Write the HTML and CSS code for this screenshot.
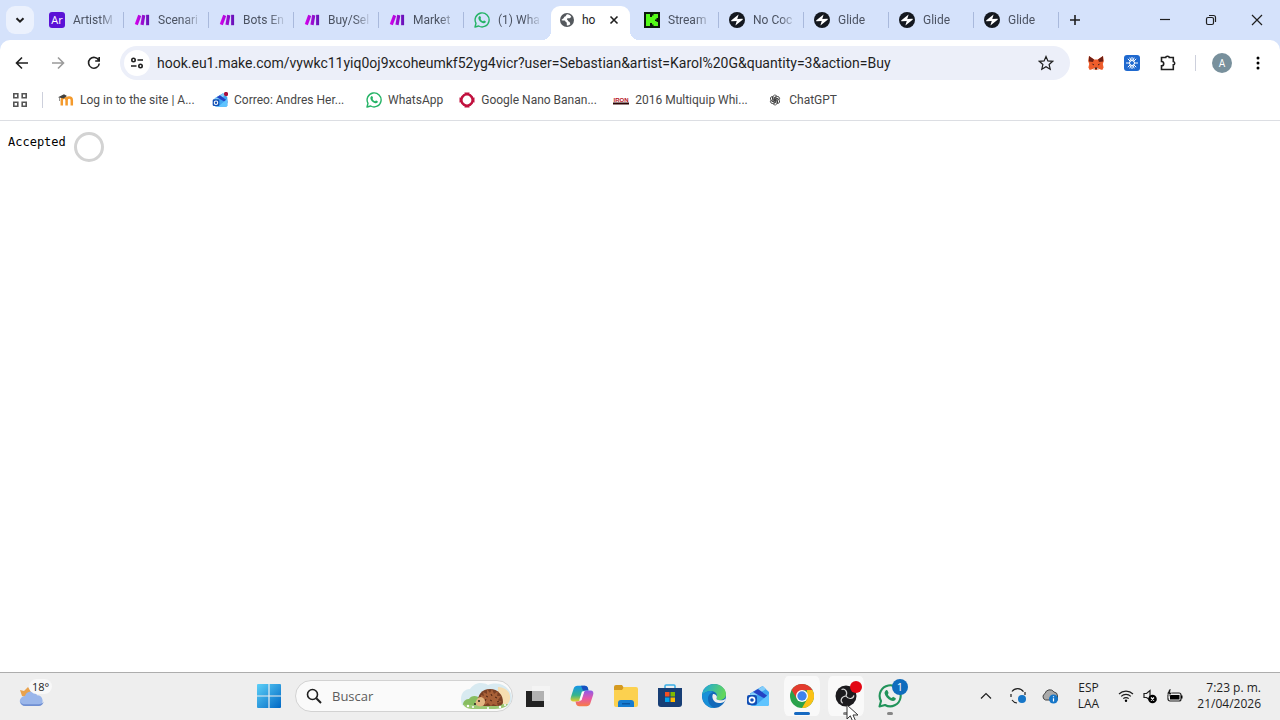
FILE: index.html
```
<!DOCTYPE html>
<html lang="es">
<head>
  <meta charset="UTF-8">
  <title>hook.eu1.make.com</title>
  <link rel="stylesheet" href="styles.css">
</head>
<body>

<!-- shared icons -->
<svg class="sprite" aria-hidden="true">
  <defs>
    <linearGradient id="makeGrad" gradientUnits="userSpaceOnUse" x1="1" x2="15"><stop offset="0" stop-color="#d800ee"/><stop offset="1" stop-color="#6414b8"/></linearGradient>
    <linearGradient id="winGrad" x1="0" y1="0" x2="1" y2="1"><stop offset="0" stop-color="#5cd0f8"/><stop offset="1" stop-color="#0067c4"/></linearGradient>
  </defs>
  <symbol id="make" viewBox="0 0 16 16">
    <g fill="url(#makeGrad)"><path d="M4.200 2.800 7.200 4.100 3.800 13.200 .8 11.900z"/><path d="M8.200 2.800l3.100.6L9.600 13.200l-3.200-.6z"/><path d="M12.100 2.800h3v10.400h-3z"/></g>
  </symbol>
  <symbol id="whatsapp" viewBox="0 0 16 16">
    <path d="M1 15l1-3.700A7 7 0 1 1 4.700 14z" fill="none" stroke="currentColor" stroke-width="1.400" stroke-linejoin="round"/>
    <path d="M5.300 4.200c.5-.4 1 0 1.200.4l.5 1.200c.1.400-.5.900-.4 1.200.5 1.100 1.400 1.900 2.500 2.300.4.100.8-.9 1.200-.7l1.300.7c.4.200.3.900-.1 1.300-.7.800-1.800.8-2.900.4C6.500 10.200 4.800 8.300 4.400 6.400c-.1-.9.300-1.700.9-2.200z" fill="currentColor"/>
  </symbol>
  <symbol id="glide" viewBox="0 0 16 16">
    <circle cx="8" cy="8" r="8" fill="#14181f"/>
    <path d="M9.600 2.600 2.400 8.200c-.4.400-.2 1.100.4 1.100l4.900-.4zM6.400 13.400l7.200-5.600c.4-.4.200-1.100-.4-1.100l-4.900.4z" fill="#fff"/>
  </symbol>
  <symbol id="outlook" viewBox="0 0 24 24">
    <path d="M4 9.500 16.500 2 23 8v12a2 2 0 0 1-2 2H6a2 2 0 0 1-2-2z" fill="#3fa4f0"/>
    <path d="M4 10 17 2l3 3L5 15z" fill="#83cdfa"/>
    <path d="M7 8l5-3 11 8v4z" fill="#2543c4"/>
    <path d="M9 22 23 10v10a2 2 0 0 1-2 2z" fill="#5fc4ff"/>
    <rect x="1" y="11" width="10" height="10" rx="2" fill="#124fb4"/>
    <circle cx="6" cy="16" r="2.600" fill="none" stroke="#fff" stroke-width="1.600"/>
  </symbol>
</svg>

<header class="browser">
  <nav class="tab-strip">
    <button class="tab-search" aria-label="Buscar pestañas"><svg width="10" height="10" viewBox="0 0 10 10"><path d="M1.500 3.200 5 6.700l3.500-3.500" class="line bold"/></svg></button>
    <div class="tabs">
      <div class="tab">
        <svg width="16" height="16" viewBox="0 0 16 16"><rect width="16" height="16" rx="3" fill="#5b12d6"/><text x="8" y="12" class="ar-logo">Ar</text></svg>
        <span class="tab-title">ArtistM</span>
      </div>
      <div class="tab"><svg width="16" height="16"><use href="#make"/></svg><span class="tab-title">Scenari</span></div>
      <div class="tab"><svg width="16" height="16"><use href="#make"/></svg><span class="tab-title">Bots En</span></div>
      <div class="tab"><svg width="16" height="16"><use href="#make"/></svg><span class="tab-title">Buy/Sel</span></div>
      <div class="tab"><svg width="16" height="16"><use href="#make"/></svg><span class="tab-title">Market</span></div>
      <div class="tab last-before"><svg class="wa" width="16" height="16"><use href="#whatsapp"/></svg><span class="tab-title">(1) Wha</span></div>
      <div class="tab active">
        <svg width="14" height="14" viewBox="0 0 14 14"><circle cx="7" cy="7" r="7" fill="#54585d"/><path d="M7 1.300c-1.200.8-.7 2-2 2.300-1 .3-.8 1.400-1.500 1.600L1.300 7c.5.500 2.300.4 3.200.5 1 .2.800 1.500 1.800 1.700.8.200.3 1.500.6 3.400 1.200 0 2.500-.5 3.500-1.400-.6-1.200-.3-2.200-1.600-2.700-1-.4-.8-1.500-1.700-1.800-.5-1.200.8-1.600 1.800-1.400.9.200 1.200-.8 2.400-1.400C10.500 2.500 9 1.400 7 1.300z" fill="#fff"/></svg>
        <span class="tab-title">ho</span>
        <button class="tab-close" aria-label="Cerrar"><svg width="10" height="10" viewBox="0 0 10 10"><path d="M1.500 1.500l7 7M8.500 1.500l-7 7" class="line"/></svg></button>
      </div>
      <div class="tab">
        <svg width="16" height="16" viewBox="0 0 16 16"><path d="M0 0h16v16H0z" fill="#0b1a0b"/><path d="M2 2h4v3h2V3.500h1.500V2H14v4h-1.500v1.500H11v1.500h1.500v1H14v4H9.500v-1.500H8V11H6v3H2z" fill="#53fc18"/></svg>
        <span class="tab-title">Stream</span>
      </div>
      <div class="tab"><svg width="16" height="16"><use href="#glide"/></svg><span class="tab-title">No Coc</span></div>
      <div class="tab"><svg width="16" height="16"><use href="#glide"/></svg><span class="tab-title">Glide</span></div>
      <div class="tab"><svg width="16" height="16"><use href="#glide"/></svg><span class="tab-title">Glide</span></div>
      <div class="tab"><svg width="16" height="16"><use href="#glide"/></svg><span class="tab-title">Glide</span></div>
    </div>
    <button class="new-tab" aria-label="Nueva pestaña"><svg width="12" height="12" viewBox="0 0 12 12"><path d="M6 1v10M1 6h10" class="line"/></svg></button>
    <div class="window-buttons">
      <button aria-label="Minimizar"><svg width="12" height="12" viewBox="0 0 12 12"><path d="M1 5.500h10" class="line thin"/></svg></button>
      <button aria-label="Restaurar"><svg width="12" height="12" viewBox="0 0 12 12"><rect x="1.500" y="3.500" width="7" height="7" rx="1.500" class="line thin"/><path d="M4 1.500h4.500a2 2 0 0 1 2 2V8" class="line thin"/></svg></button>
      <button aria-label="Cerrar ventana"><svg width="12" height="12" viewBox="0 0 12 12"><path d="M1 1l10 10M11 1L1 11" class="line thin"/></svg></button>
    </div>
  </nav>

  <div class="toolbar">
    <button class="tool" aria-label="Atrás"><svg width="16" height="16" viewBox="0 0 16 16"><path d="M14 8H2.500M8 2.500 2.500 8 8 13.500" class="line"/></svg></button>
    <button class="tool" aria-label="Adelante" disabled><svg width="16" height="16" viewBox="0 0 16 16"><path d="M2 8h11.500M8 2.500 13.500 8 8 13.500" class="line"/></svg></button>
    <button class="tool" aria-label="Recargar"><svg width="16" height="16" viewBox="0 0 16 16"><path d="M12.800 5.400A5.400 5.400 0 1 0 13.300 8.500M13.200 2v4H9.200" class="line"/></svg></button>
    <div class="omnibox">
      <button class="site-info" aria-label="Información del sitio"><svg width="14" height="14" viewBox="0 0 14 14"><circle cx="3.500" cy="4" r="1.700" class="line"/><path d="M7.500 4H13M1 10h5.500" class="line"/><circle cx="10.500" cy="10" r="1.700" class="line"/></svg></button>
      <input type="text" class="url" aria-label="Dirección" value="hook.eu1.make.com/vywkc11yiq0oj9xcoheumkf52yg4vicr?user=Sebastian&amp;artist=Karol%20G&amp;quantity=3&amp;action=Buy">
      <button class="star" aria-label="Añadir a marcadores"><svg width="16" height="16" viewBox="0 0 16 16"><path d="M8 1.500l1.900 4.400 4.800.4-3.600 3.200 1.100 4.700L8 11.700l-4.200 2.500 1.100-4.700L1.300 6.300l4.800-.4z" class="line thin"/></svg></button>
    </div>
    <div class="extensions">
      <button class="tool" aria-label="MetaMask"><svg width="16" height="16" viewBox="0 0 16 16"><path d="M1 1l5.200 3.600h3.600L15 1l.8 5-1 3 .8 3.500-1.300 2.500-3.300-1-1.500 1H6.500L5 14l-3.300 1L.4 12.500 1.200 9l-1-3z" fill="#ef5d2b"/><path d="M1 1l5 3.600L5 7 .8 6.500zM15 1l-5 3.600L11 7l4.200-.5z" fill="#6d2015"/><path d="M3.500 8.500l2.500.7-.2 1.300zM12.500 8.500l-2.500.7.2 1.300zM6.500 12.500h3l-.5 1.700H7z" fill="#42201e"/><path d="M5 14l1.500-1.500.5 2.500h-.5zM11 14l-1.500-1.500L9 15h.5z" fill="#e2cdc0"/></svg></button>
      <button class="tool" aria-label="Extensión"><svg width="16" height="16" viewBox="0 0 16 16"><rect width="16" height="16" rx="3" fill="#1f69cf"/><path d="M8 2v4M8 10v4M2 8h4M10 8h4M3.800 3.800l2.800 2.800M9.400 9.400l2.800 2.800M12.200 3.800 9.400 6.600M6.600 9.400l-2.800 2.800M5.800 2.600l1.300 3.200M10.200 2.600 8.900 5.800M5.800 13.400l1.300-3.200M10.200 13.400l-1.300-3.200" stroke="#fff"/><circle cx="8" cy="8" r="2.500" fill="none" stroke="#fff"/></svg></button>
      <button class="tool" aria-label="Extensiones"><svg width="18" height="18" viewBox="0 0 18 18"><path d="M2.500 3.500h4.200a1.800 1.300 0 0 1 3.600 0h4V7.500a1.400 1.700 0 0 1 0 3.400v4.600h-11.800v-3.600a2 2 0 0 0 0-4.400z" class="line"/></svg></button>
      <span class="divider"></span>
      <button class="avatar" aria-label="Perfil">A</button>
      <button class="tool menu" aria-label="Menú"><svg width="4" height="16" viewBox="0 0 4 16"><circle cx="2" cy="3" r="1.500"/><circle cx="2" cy="8" r="1.500"/><circle cx="2" cy="13" r="1.500"/></svg></button>
    </div>
  </div>

  <nav class="bookmarks">
    <button class="apps" aria-label="Aplicaciones"><svg width="16" height="16" viewBox="0 0 16 16" fill="none" stroke="#555" stroke-width="1.600"><path d="M1.800 1.800h4v4h-4zM10.200 1.800h4v4h-4zM1.800 10.200h4v4h-4zM10.200 10.200h4v4h-4z"/></svg></button>
    <span class="divider"></span>
    <a href="#" class="wide"><svg width="16" height="16" viewBox="0 0 16 16"><path d="M3.800 13.500V8.200a2.400 2.400 0 0 1 4.800 0v5.300M8.600 8.200a2.600 2.600 0 0 1 5.200 0v5.300" fill="none" stroke="#f49a2c" stroke-width="2.500"/><path d="M0 5.200 6 2.300 9 4 5.500 6.500z" fill="#40403e"/><path d="M1.500 5v4" stroke="#666" stroke-width=".7"/></svg><span>Log in to the site | A...</span></a>
    <a href="#" class="wide"><svg width="16" height="16" viewBox="0 0 24 24"><use href="#outlook"/><circle cx="21" cy="3" r="3.200" fill="#a90f3c"/></svg><span>Correo: Andres Her...</span></a>
    <a href="#"><svg class="wa" width="16" height="16"><use href="#whatsapp"/></svg><span>WhatsApp</span></a>
    <a href="#" class="wide"><svg width="16" height="16" viewBox="0 0 16 16"><path d="M4.500 2h1V.5h5V2h1L14 4.500v1h1.500v5H14v1L11.500 14h-1v1.500h-5V14h-1L2 11.500v-1H.5v-5H2v-1z" fill="#c1113e"/><circle cx="8" cy="8" r="4.400" fill="#fff"/></svg><span>Google Nano Banan...</span></a>
    <a href="#" class="wide"><svg width="16" height="16" viewBox="0 0 16 16"><text x="8" y="9.500" class="iron-logo">IRON</text><path d="M0 10.500h16v2H0z" fill="#2b0505"/></svg><span>2016 Multiquip Whi...</span></a>
    <a href="#"><svg width="16" height="16" viewBox="-2 -2 20 20"><g fill="none" stroke="#333" stroke-width="1"><path id="petal" d="M5.500 7.800V4.300a2.500 2.500 0 0 1 4.700-1.200L7 5v4.500"/><use href="#petal" transform="rotate(60 8 8)"/><use href="#petal" transform="rotate(120 8 8)"/><use href="#petal" transform="rotate(180 8 8)"/><use href="#petal" transform="rotate(240 8 8)"/><use href="#petal" transform="rotate(300 8 8)"/></g></svg><span>ChatGPT</span></a>
  </nav>
</header>

<main class="page">
  <pre>Accepted</pre>
  <span class="busy-ring"></span>
</main>

<footer class="taskbar">
  <div class="weather">
    <svg width="26" height="20" viewBox="0 0 26 20"><path d="M1 3l4 1 4-4 3 5-5 5-4-1z" fill="#e9a24c"/><path d="M6.500 19a5.500 5 0 0 1-.5-10 6.500 6.500 0 0 1 12-.8A5.600 5.500 0 0 1 19.500 19z" fill="#9ab6ea"/><path d="M1.200 14.500c1 2 2.800 2.800 5.300 2.800h13c2.500 0 4.200-1 5.200-2.800-.4 2.700-2.300 4.500-5.200 4.500h-13c-2.900 0-4.800-1.800-5.300-4.500z" fill="#6f8fd2"/></svg>
    <span class="temp">18°</span>
  </div>

  <div class="apps-row">
    <button class="app" aria-label="Inicio"><svg width="24" height="24" viewBox="0 0 24 24" fill="url(#winGrad)"><path d="M0 1a1 1 0 0 1 1-1h22a1 1 0 0 1 1 1v22a1 1 0 0 1-1 1H1a1 1 0 0 1-1-1z"/><path d="M11.400 0h1.200v24h-1.200zM0 11.400h24v1.200H0z" fill="#eee"/></svg></button>
    <label class="search">
      <svg width="16" height="16" viewBox="0 0 16 16"><circle cx="6.500" cy="6.500" r="5" class="line"/><path d="M10.300 10.300 15 15" class="line bold"/></svg>
      <input type="text" placeholder="Buscar" aria-label="Buscar">
      <svg width="52" height="28" viewBox="0 0 52 28">
        <path d="M2 23C-1 14 3 7 10 7c5-7 13-7 18-4 8-3 16-1 20 4 5 5 5 12 0 17-8 4-36 4-46-1z" fill="#d8eaf1"/>
        <path d="M38 5c7 0 13 5 12 12-1 6-6 8-13 8z" fill="#f6ddb0"/>
        <path d="M3 23c0-5 4-6 6-6 2-4 9-4 11 0l1 7z" fill="#87bd60"/>
        <path d="M3 22c10 3 30 0 45 0-2 4-8 5-16 5H14c-6 0-9-1-11-5z" fill="#9cc873"/>
        <path d="M18 21c-1-8 4-14 12-14s13 6 13 13c0 3-3 4-6 4H24c-3 0-5-1-6-3z" fill="#7b4024"/>
        <path d="M21 13l3 1-1-4 4 2 0-5 3 4 2-4 2 5 4-3-1 5 4 0-3 4 4 2-5 1 1 3-5-2-2 2-3-3-3 2-1-4-3 1z" fill="#a86037"/>
        <path d="M26 14l2 1M31 12l1 2M35 15l2 1M30 18l2 1M37 20l2-1M25 19l1-2" stroke="#4c2414"/>
        <path d="M15 22c1-3 2-7 6-7 4 1 5 5 3 8-2 2-6 2-9-1z" fill="#e3b681"/><circle cx="19" cy="19" r="1" fill="#222"/><circle cx="15" cy="22" r="1" fill="#222"/>
        <g fill="#fff"><circle cx="8" cy="24" r="1.200"/><circle cx="13" cy="25" r="1"/><circle cx="40" cy="25" r="1.200"/><circle cx="45" cy="23" r="1"/><circle cx="28" cy="26" r="1"/></g>
      </svg>
    </label>
    <button class="app" aria-label="Vista de tareas"><svg width="24" height="24" viewBox="0 0 24 24"><path d="M0 7h18v16H0z" fill="#222"/><path d="M6 2h18v15H6z" fill="#f4f4f4"/><path d="M6 7h12v10H6z" fill="#b2b2b2"/></svg></button>
    <button class="app" aria-label="Copilot"><svg width="24" height="24" viewBox="0 0 26 24">
      <linearGradient id="cpA" x2="0" y2="1"><stop offset="0" stop-color="#1595e8"/><stop offset=".6" stop-color="#36b58c"/><stop offset="1" stop-color="#e8cf25"/></linearGradient>
      <linearGradient id="cpB" x2="0" y2="1"><stop offset="0" stop-color="#8b5bea"/><stop offset=".5" stop-color="#e557a7"/><stop offset="1" stop-color="#f77b45"/></linearGradient>
      <path d="M8 1h8c2 0 3 1 3.500 3l.5 2h-3c-2 0-3 1-3.500 3l-2 6c-.5 2-2 3-4 3H4c-3 0-4-2-3-5l3-9c.7-2 2-3 4-3z" fill="url(#cpA)"/>
      <path d="M12 1h4c2 0 3 1 3.500 3l.5 2h-6z" fill="#1751c0"/>
      <path d="M18 23h-8c-2 0-3-1-3.500-3L6 18h3c2 0 3-1 3.500-3l2-6c.5-2 2-3 4-3H22c3 0 4 2 3 5l-3 9c-.7 2-2 3-4 3z" fill="url(#cpB)"/>
      <path d="M13 7h2.500l-3 9.500H10z" fill="#fafafa"/>
    </svg></button>
    <button class="app" aria-label="Explorador"><svg width="24" height="22" viewBox="0 0 24 22"><path d="M0 2a2 2 0 0 1 2-2h6l2 3h12v5H0z" fill="#d59a20"/><path d="M0 5h8l2-3h12a2 2 0 0 1 2 2v16a2 2 0 0 1-2 2H2a2 2 0 0 1-2-2z" fill="#fcd14f"/><path d="M4 22v-4a3 3 0 0 1 3-3h10a3 3 0 0 1 3 3v4z" fill="#167cd0"/><path d="M8 18h8v1.500H8z" fill="#0a57a3"/></svg></button>
    <button class="app" aria-label="Store"><svg width="24" height="24" viewBox="0 0 24 24"><path d="M7 4V2a1 1 0 0 1 1-1h8a1 1 0 0 1 1 1v2" fill="none" stroke="#39aee6" stroke-width="1.500"/><path d="M0 4h24v16a3 3 0 0 1-3 3H3a3 3 0 0 1-3-3z" fill="#173e75"/><path d="M7 8h4.500v4.500H7z" fill="#f25022"/><path d="M12.500 8H17v4.500h-4.500z" fill="#7fba00"/><path d="M7 13.500h4.500V18H7z" fill="#00a4ef"/><path d="M12.500 13.500H17V18h-4.500z" fill="#ffb900"/></svg></button>
    <button class="app" aria-label="Edge"><svg width="24" height="24" viewBox="0 0 24 24">
      <linearGradient id="edgeA" x2="1" y2=".3"><stop offset="0" stop-color="#1ba5e4"/><stop offset="1" stop-color="#62d65b"/></linearGradient>
      <circle cx="12" cy="12" r="12" fill="#1269ba"/>
      <path d="M0 11C1 4 6 0 12 0c7 0 12 5 12 10 0 4-3 6-6.500 6-2 0-4-.8-3-2.300C16 11 14 7 9 7c-4 0-7 2-9 4z" fill="url(#edgeA)"/>
      <path d="M9 7c-4 0-7 2-9 4 0 7 5 13 12 13-4-2-6-5-6-9 0-3 1-5 5-7z" fill="#1890d8"/>
      <path d="M11 10c-2 4 1 9 6 9 2 0 4-.4 5.500-1.500l1.500-3c-2 1.500-4 2-6 1.800-3-.2-4.200-1.200-3.300-2.600.8-1.200-.7-3.700-3.700-3.700z" fill="#eee"/>
    </svg></button>
    <button class="app" aria-label="Outlook"><svg width="24" height="24"><use href="#outlook"/></svg></button>
    <button class="app open current" aria-label="Chrome"><svg width="24" height="24" viewBox="0 0 24 24"><circle cx="12" cy="12" r="12" fill="#2ba24c"/><path d="M1.600 6A12 12 0 0 1 22.400 6L12 6.500 7 15z" fill="#e33b2e"/><path d="M22.400 6A12 12 0 0 1 12 24l5.200-9L17 6z" fill="#fbc116"/><circle cx="12" cy="12" r="6" fill="#fff"/><circle cx="12" cy="12" r="4.700" fill="#3f82ee"/></svg></button>
    <button class="app open" aria-label="OBS"><svg width="22" height="22" viewBox="0 0 22 22"><circle cx="11" cy="11" r="10.500" fill="#1c1b1e"/><g fill="none" stroke="#d5d5d5" stroke-width="1.200"><path id="obs" d="M11 11C13 7 10 3 6.500 4.500"/><use href="#obs" transform="rotate(120 11 11)"/><use href="#obs" transform="rotate(240 11 11)"/></g></svg><span class="badge rec"></span>
      <svg class="pointer" width="16" height="20" viewBox="0 0 16 20"><path d="M1 1v14l3.300-3.200L7 18l2.600-1.100L7 11h5z" fill="#fff" stroke="#333"/></svg>
    </button>
    <button class="app running" aria-label="WhatsApp"><svg width="24" height="24"><use href="#whatsapp"/></svg><span class="badge">1</span></button>
  </div>

  <div class="tray">
    <button aria-label="Iconos ocultos"><svg width="12" height="8" viewBox="0 0 12 8"><path d="M1 6.500l5-5 5 5" class="line thin"/></svg></button>
    <button aria-label="Actualización"><svg width="18" height="18" viewBox="0 0 18 18"><path d="M3 4.500a7 7 0 0 1 11.500.2M2 7v3M3 13a7 7 0 0 0 5 3M16 5v3" class="line thin"/><circle cx="13" cy="12" r="4" fill="#1676c8"/></svg></button>
    <button aria-label="OneDrive"><svg width="18" height="18" viewBox="0 0 18 18"><path d="M4.500 13a3.500 3.500 0 0 1-.5-6.500 5 5 0 0 1 9-1.500 4 4 0 0 1 3.500 4V13z" fill="#aaa" stroke="#444"/><circle cx="12.500" cy="12" r="4.500" fill="#1676c8"/><path d="M12.500 9.300v1M12.500 11.300v3.200" stroke="#fff" stroke-width="1.200"/></svg></button>
    <button class="lang">ESP<br>LAA</button>
    <button class="status" aria-label="Red, volumen y batería">
      <svg width="16" height="14" viewBox="0 0 16 14"><path d="M1 5a10 10 0 0 1 14 0M3.200 7.400a6.800 6.800 0 0 1 9.600 0M5.300 9.700a3.800 3.800 0 0 1 5.400 0" class="line thin"/><circle cx="8" cy="11.800" r="1.200"/></svg>
      <svg width="16" height="16" viewBox="0 0 16 16"><path d="M2 5.500h2.500L8 2.500V12L4.500 9.500H2z" class="line thin"/><circle cx="10.500" cy="11" r="4.300"/><path d="M9 9.500l3 3M12 9.500l-3 3" stroke="#fff" stroke-width="1.200"/></svg>
      <svg width="18" height="14" viewBox="0 0 18 14"><rect x="2" y="4" width="13" height="8" rx="2" class="line thin"/><path d="M4 6h9.500v4.500H4zM15 6.500h1.500v3H15z"/><path d="M3.500 0 1 5h2.500L2.500 8.500 6 3.500H4L5 0z" stroke="#eee" stroke-width=".5"/></svg>
    </button>
    <button class="clock">7:23 p. m.<br>21/04/2026</button>
  </div>
</footer>

</body>
</html>
```
FILE: styles.css
```
* {
  box-sizing: border-box;
}

body {
  margin: 0;
  min-height: 100vh;
  display: flex;
  flex-direction: column;
  background: #fff;
  color: #1f1f1f;
  font-family: "Open Sans", "Noto Sans", sans-serif;
  font-size: 12px;
}

button {
  display: flex;
  align-items: center;
  justify-content: center;
  flex: none;
  padding: 0;
  border: none;
  background: none;
  color: inherit;
  font: inherit;
}

input {
  min-width: 0;
  flex: 1;
  padding: 0;
  border: none;
  outline: none;
  background: none;
  color: inherit;
  font: inherit;
}

svg {
  flex: none;
}

.sprite {
  position: absolute;
  width: 0;
  height: 0;
}

.line {
  fill: none;
  stroke: currentColor;
  stroke-width: 1.6;
}

.thin {
  stroke-width: 1.2;
}

.bold {
  stroke-width: 2;
}

.wa {
  color: #25b366;
}

.divider {
  width: 1px;
  height: 16px;
  background: #cdd0dc;
}

/* tabs */
.browser {
  background: #d5e2fb;
  font-family: Roboto, sans-serif;
}

.tab-strip {
  display: flex;
  align-items: center;
  height: 40px;
  padding-left: 6px;
}

.tab-search {
  width: 28px;
  height: 28px;
  margin-right: 4px;
  border-radius: 9px;
  background: #ebf1fd;
}

.tabs {
  display: flex;
  align-self: stretch;
}

.tab {
  position: relative;
  display: flex;
  align-items: center;
  gap: 8px;
  width: 85px;
  padding: 0 6px 0 11px;
  color: #4b5261;
}

.tab:not(.active):not(.last-before)::after {
  content: "";
  position: absolute;
  right: -1px;
  top: 12px;
  width: 1px;
  height: 16px;
  background: #a9b9dc;
}

.tab-title {
  flex: 1;
  overflow: hidden;
  line-height: 16px;
  white-space: nowrap;
  -webkit-mask-image: linear-gradient(90deg, #000 60%, transparent);
  mask-image: linear-gradient(90deg, #000 60%, transparent);
}

.tab.active {
  align-self: flex-end;
  height: 34px;
  margin: 0 3px;
  width: 79px;
  padding: 0 11px 6px 9px;
  border-radius: 9px 9px 0 0;
  background: #fff;
  color: #1f1f1f;
}

.tab.active::before,
.tab.active::after {
  content: "";
  position: absolute;
  bottom: 0;
  width: 9px;
  height: 9px;
}

.tab.active::before {
  left: -9px;
  background: radial-gradient(circle at 0 0, transparent 9px, #fff 9px);
}

.tab.active::after {
  right: -9px;
  background: radial-gradient(circle at 100% 0, transparent 9px, #fff 9px);
}

.tab.active .tab-title {
  -webkit-mask-image: none;
  mask-image: none;
}

.new-tab {
  width: 34px;
  height: 28px;
}

.window-buttons {
  display: flex;
  align-self: stretch;
  margin-left: auto;
}

.window-buttons button {
  width: 46px;
}

.ar-logo {
  fill: #fff;
  font: 11px "Open Sans", sans-serif;
  text-anchor: middle;
}

/* toolbar */
.toolbar {
  display: flex;
  align-items: center;
  height: 46px;
  padding: 0 4px;
  border-radius: 10px 10px 0 0;
  background: #fff;
}

.tool {
  width: 36px;
  height: 34px;
}

.tool:disabled {
  color: #9b9b9b;
}

.omnibox {
  display: flex;
  align-items: center;
  flex: 1;
  height: 34px;
  margin-left: 8px;
  padding: 0 16px 0 4px;
  border-radius: 17px;
  background: #eceff9;
}

.site-info {
  width: 26px;
  height: 26px;
  margin-right: 7px;
  border-radius: 50%;
  background: #fff;
}

.url {
  font-size: 14px;
}

.extensions {
  display: flex;
  align-items: center;
  margin-left: 8px;
}

.extensions .divider {
  margin: 0 16px 0 9px;
}

.avatar {
  width: 20px;
  height: 20px;
  border-radius: 50%;
  background: #78909c;
  color: #fff;
  font-size: 10px;
}

.menu {
  margin-left: 8px;
}

/* bookmarks */
.bookmarks {
  display: flex;
  align-items: center;
  height: 35px;
  padding: 0 12px 6px;
  border-bottom: 1px solid #dcdee3;
  background: #fff;
}

.bookmarks .divider {
  margin: 0 15px 0 14px;
}

.bookmarks a {
  display: flex;
  align-items: center;
  gap: 6px;
  margin-right: 16px;
  color: #474747;
  text-decoration: none;
  white-space: nowrap;
}

.bookmarks .wide {
  width: 138px;
}

.iron-logo {
  fill: #b5121b;
  font: bold 6px "Liberation Sans", sans-serif;
  text-anchor: middle;
}

/* page */
.page {
  position: relative;
  flex: 1;
  padding: 13px 8px;
}

.page pre {
  margin: 0;
  color: #000;
  font: 12px/16px "DejaVu Sans Mono", monospace;
}

.busy-ring {
  position: absolute;
  left: 74px;
  top: 11px;
  width: 30px;
  height: 30px;
  border: 3px solid #d3d3d3;
  border-radius: 50%;
}

/* taskbar */
.taskbar {
  display: flex;
  align-items: center;
  height: 48px;
  padding-bottom: 1px;
  border-top: 1px solid #adadad;
  background: #eee;
}

.weather {
  position: relative;
  width: 247px;
  padding: 6px 0 0 19px;
}

.temp {
  position: absolute;
  left: 29px;
  top: -2px;
  padding: 0 3px;
  border-radius: 8px;
  background: #f8f8f8;
  font-size: 11px;
  line-height: 15px;
}

.apps-row {
  display: flex;
  align-items: center;
}

.app {
  position: relative;
  width: 44px;
  height: 40px;
}

.search {
  display: flex;
  align-items: center;
  width: 218px;
  height: 32px;
  margin: 0 3px 0 4px;
  padding-left: 10px;
  border: 1px solid #d2d2d2;
  border-radius: 16px;
  background: #fafafa;
}

.search input {
  margin-left: 10px;
  font-size: 13px;
}

.search input::placeholder {
  color: #5c5c5c;
  opacity: 1;
}

.open {
  border: 4px solid #eee;
  border-width: 0 4px;
  border-radius: 8px;
  background: #f9f9f9;
}

.open::after,
.running::after {
  content: "";
  position: absolute;
  left: 50%;
  bottom: 1px;
  width: 6px;
  height: 3px;
  margin-left: -3px;
  border-radius: 2px;
  background: #868686;
}

.current::after {
  width: 16px;
  margin-left: -8px;
  background: #1669c1;
}

.running {
  color: #21935a;
}

.badge {
  position: absolute;
  right: 4px;
  top: 3px;
  width: 16px;
  height: 16px;
  border-radius: 50%;
  background: #0f6cbd;
  color: #fff;
  font-size: 11px;
  line-height: 16px;
}

.rec {
  right: 2px;
  top: 5px;
  width: 12px;
  height: 12px;
  background: #e30613;
}

.pointer {
  position: absolute;
  left: 18px;
  top: 28px;
  z-index: 1;
}

.tray {
  display: flex;
  align-items: center;
  margin-left: auto;
  padding-right: 19px;
}

.tray button {
  width: 32px;
  height: 40px;
}

.tray .lang {
  width: 45px;
  line-height: 16px;
}

.tray .status {
  gap: 8px;
  width: 80px;
}

.tray .clock {
  justify-content: flex-end;
  width: 70px;
  line-height: 16px;
  text-align: right;
}
```
